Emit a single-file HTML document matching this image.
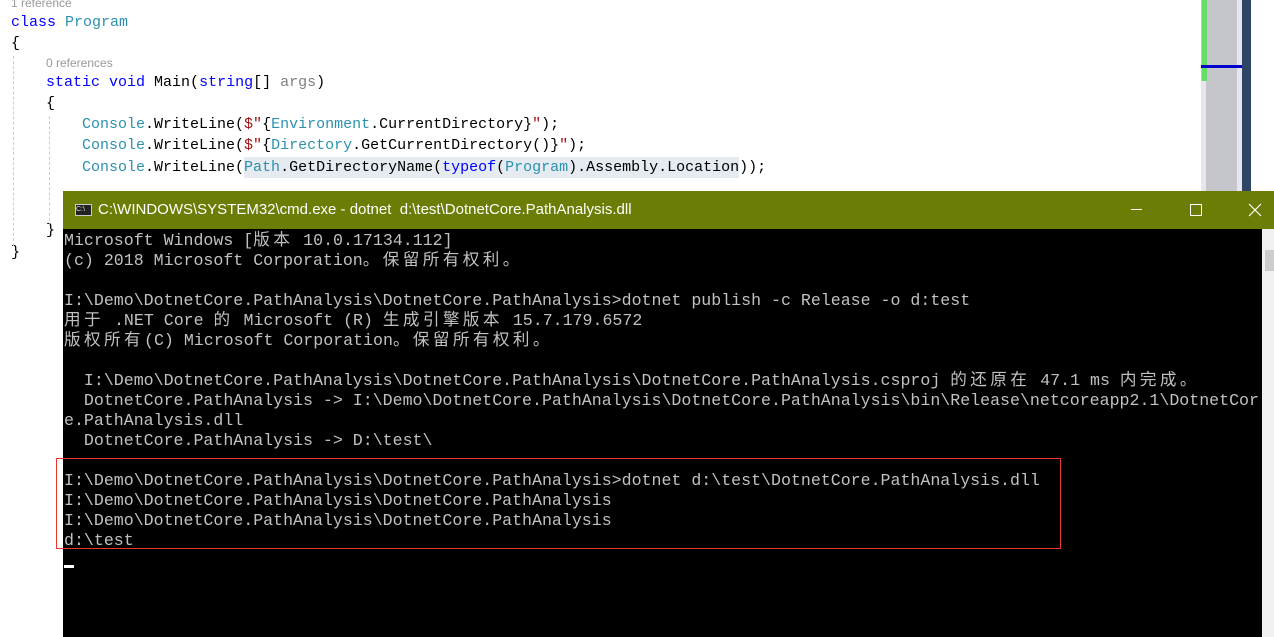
<!DOCTYPE html>
<html><head><meta charset="utf-8"><style>
html,body{margin:0;padding:0;width:1274px;height:637px;overflow:hidden;background:#fff;position:relative}
.ed{position:absolute;font-family:"Liberation Mono",monospace;font-size:15px;white-space:pre;line-height:21px}
.cl{position:absolute;font-family:"Liberation Sans",sans-serif;font-size:12px;color:#999}
.k{color:#0000ff}.t{color:#2b91af}.s{color:#a31515}.g{color:#808080}
.con{position:absolute;left:63px;top:229px;width:1199px;height:408px;background:#000}
.ct{position:absolute;left:64px;top:231px;font-family:"Liberation Mono","Noto Sans CJK SC",monospace;font-size:16.6px;line-height:20px;color:#c0c0c0;white-space:pre}
.c{letter-spacing:3.4px}
.title{position:absolute;left:63px;top:191px;width:1211px;height:38px;background:#6b7d05;color:#fff;font-family:"Liberation Sans",sans-serif;font-size:15px}
</style></head><body>
<div class="cl" style="left:11px;top:-4px">1 reference</div>
<div class="ed" style="left:11px;top:12px"><span class="k">class</span> <span class="t">Program</span></div>
<div class="ed" style="left:11px;top:33px">{</div>
<div class="cl" style="left:46px;top:56px">0 references</div>
<div class="ed" style="left:46px;top:72px"><span class="k">static</span> <span class="k">void</span> Main(<span class="k">string</span>[] <span class="g">args</span>)</div>
<div class="ed" style="left:46px;top:93px">{</div>
<div class="ed" style="left:82px;top:114px"><span class="t">Console</span>.WriteLine(<span class="s">$"</span>{<span class="t">Environment</span>.CurrentDirectory}<span class="s">"</span>);</div>
<div class="ed" style="left:82px;top:135px"><span class="t">Console</span>.WriteLine(<span class="s">$"</span>{<span class="t">Directory</span>.GetCurrentDirectory()}<span class="s">"</span>);</div>
<div style="position:absolute;left:244px;top:157px;width:495px;height:21px;background:#e5ebf1"></div>
<div class="ed" style="left:82px;top:157px"><span class="t">Console</span>.WriteLine(<span class="t">Path</span>.GetDirectoryName(<span class="k">typeof</span>(<span class="t">Program</span>).Assembly.Location));</div>
<div class="ed" style="left:46px;top:220px">}</div>
<div class="ed" style="left:11px;top:242px">}</div>
<div style="position:absolute;left:13px;top:56px;height:190px;border-left:1px dashed #ccc"></div>
<div style="position:absolute;left:49px;top:116px;height:110px;border-left:1px dashed #ccc"></div>
<div style="position:absolute;left:1201px;top:0;width:36px;height:191px;background:#c5c6cb"></div>
<div style="position:absolute;left:1201px;top:81px;width:5px;height:110px;background:#e6e6ec"></div>
<div style="position:absolute;left:1237px;top:0;width:5px;height:191px;background:#e6e6ec"></div>
<div style="position:absolute;left:1202px;top:0;width:5px;height:81px;background:#66dd66"></div>
<div style="position:absolute;left:1201px;top:65px;width:41px;height:3px;background:#0000cc"></div>
<div style="position:absolute;left:1242px;top:0;width:9px;height:191px;background:#2e4566"></div>
<div class="title">
<div style="position:absolute;left:12px;top:13px;width:17px;height:12px;background:#222;border:1px solid #ccc;box-sizing:border-box;font-size:7px;line-height:10px;color:#ddd">C:\</div>
<div style="position:absolute;left:35px;top:10px">C:\WINDOWS\SYSTEM32\cmd.exe - dotnet&nbsp; d:\test\DotnetCore.PathAnalysis.dll</div>
<div style="position:absolute;left:1068px;top:18px;width:11px;height:1px;background:#fff"></div>
<div style="position:absolute;left:1127px;top:13px;width:10px;height:10px;border:1px solid #fff"></div>
<svg style="position:absolute;left:1185px;top:12px" width="14" height="14"><path d="M1 1L13 13M13 1L1 13" stroke="#fff" stroke-width="1.2"/></svg>
</div>
<div class="con"></div>
<div style="position:absolute;left:1262px;top:229px;width:12px;height:408px;background:#f0f0f0"></div>
<div style="position:absolute;left:1265px;top:250px;width:9px;height:21px;background:#cdcdcd"></div>
<div class="ct">Microsoft Windows [<span class="c">版本</span> 10.0.17134.112]
(c) 2018 Microsoft Corporation<span class="c">。保留所有权利。</span>

I:\Demo\DotnetCore.PathAnalysis\DotnetCore.PathAnalysis>dotnet publish -c Release -o d:test
<span class="c">用于</span> .NET Core <span class="c">的</span> Microsoft (R) <span class="c">生成引擎版本</span> 15.7.179.6572
<span class="c">版权所有</span>(C) Microsoft Corporation<span class="c">。保留所有权利。</span>

  I:\Demo\DotnetCore.PathAnalysis\DotnetCore.PathAnalysis\DotnetCore.PathAnalysis.csproj <span class="c">的还原在</span> 47.1 ms <span class="c">内完成。</span>
  DotnetCore.PathAnalysis -> I:\Demo\DotnetCore.PathAnalysis\DotnetCore.PathAnalysis\bin\Release\netcoreapp2.1\DotnetCor
e.PathAnalysis.dll
  DotnetCore.PathAnalysis -> D:\test\

I:\Demo\DotnetCore.PathAnalysis\DotnetCore.PathAnalysis>dotnet d:\test\DotnetCore.PathAnalysis.dll
I:\Demo\DotnetCore.PathAnalysis\DotnetCore.PathAnalysis
I:\Demo\DotnetCore.PathAnalysis\DotnetCore.PathAnalysis
d:\test</div>
<div style="position:absolute;left:64px;top:565px;width:10px;height:3px;background:#fff"></div>
<div style="position:absolute;left:56px;top:458px;width:1005px;height:91px;border:1px solid #ee3333;box-sizing:border-box"></div>
</body></html>
